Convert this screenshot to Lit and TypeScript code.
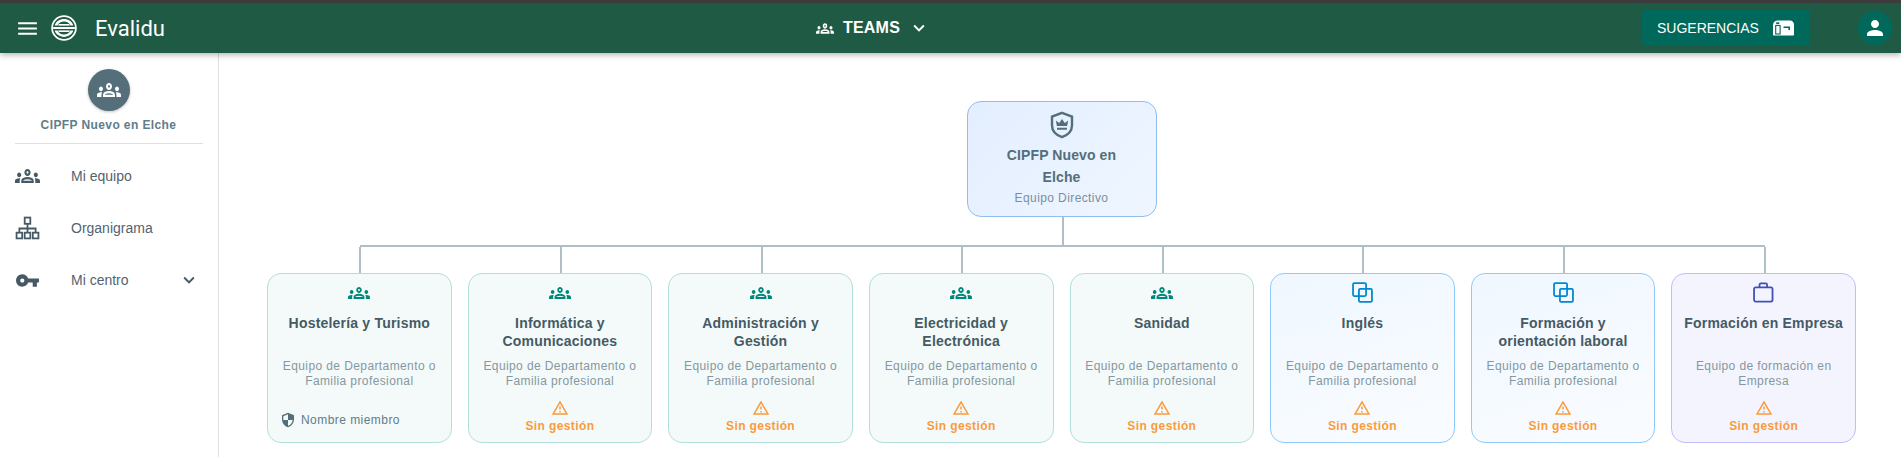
import { LitElement, html, css, svg } from 'lit'
import { customElement } from 'lit/decorators.js'

const GROUPS = 'M4 13c1.1 0 2-.9 2-2s-.9-2-2-2-2 .9-2 2 .9 2 2 2zm1.13 1.1c-.37-.06-.74-.1-1.13-.1-.99 0-1.93.21-2.78.58C.48 14.9 0 15.62 0 16.43V18h4.5v-1.61c0-.83.23-1.61.63-2.29zM20 13c1.1 0 2-.9 2-2s-.9-2-2-2-2 .9-2 2 .9 2 2 2zm4 3.43c0-.81-.48-1.53-1.22-1.85-.85-.37-1.79-.58-2.78-.58-.39 0-.76.04-1.13.1.4.68.63 1.46.63 2.29V18H24v-1.57zm-7.76-2.78c-1.17-.52-2.61-.9-4.24-.9-1.63 0-3.07.39-4.24.9C6.68 14.13 6 15.21 6 16.39V18h12v-1.61c0-1.18-.68-2.26-1.76-2.74zm-8.17 2.35c.09-.23.13-.39.91-.69.97-.38 1.99-.56 3.02-.56s2.05.18 3.02.56c.77.3.81.46.91.69H8.07zM12 8c.55 0 1 .45 1 1s-.45 1-1 1-1-.45-1-1 .45-1 1-1m0-2c-1.66 0-3 1.34-3 3s1.34 3 3 3 3-1.34 3-3-1.34-3-3-3z'
const WARN = 'M12 5.99L19.53 19H4.47L12 5.99M12 2L1 21h22L12 2zm1 14h-2v2h2v-2zm0-6h-2v4h2v-4z'
const CHEVRON = 'M7.41 8.59L12 13.17l4.59-4.58L18 10l-6 6-6-6z'
const KEY = 'M12.65 10C11.83 7.67 9.61 6 7 6c-3.31 0-6 2.69-6 6s2.69 6 6 6c2.61 0 4.83-1.67 5.65-4H17v4h4v-4h2v-4H12.65zM7 14c-1.1 0-2-.9-2-2s.9-2 2-2 2 .9 2 2-.9 2-2 2z'
const PERSON = 'M12 12c2.21 0 4-1.79 4-4s-1.79-4-4-4-4 1.79-4 4 1.79 4 4 4zm0 2c-2.67 0-8 1.34-8 4v2h16v-2c0-2.66-5.33-4-8-4z'
const MENU = 'M3 18h18v-2H3v2zm0-5h18v-2H3v2zm0-7v2h18V6H3z'
const SHIELD_HALF = 'M12 1L3 5v6c0 5.55 3.84 10.74 9 12 5.16-1.26 9-6.45 9-12V5l-9-4zm0 10.99h7c-.53 4.12-3.28 7.79-7 8.94V12H5V6.3l7-3.11v8.8z'

const icon = (d: string, cls = '') => html`<svg class=${cls} viewBox="0 0 24 24" fill="currentColor"><path d=${d}></path></svg>`

// the reference glyph is a bit taller than the stock one, so it is stretched by its box
const groupsIcon = (cls: string) => html`<svg class=${cls} viewBox="0 0 24 24" preserveAspectRatio="none" fill="currentColor"><path d=${GROUPS}></path></svg>`

const crownShield = html`<svg class="root-icon" viewBox="0 0 24 28" fill="none">
  <path d="M12 1.800l10 3.700v8.700c0 5.500-4.100 9.800-10 11.900-5.900-2.100-10-6.400-10-11.900V5.500z" stroke="currentColor" stroke-width="2.400"></path>
  <path d="M5.800 9.500l3.400 2.400L12 8l2.800 3.900 3.400-2.400-1.100 5.600H6.900zM7 16.700h10v2.100H7z" fill="currentColor"></path>
</svg>`

const orgIcon = html`<svg viewBox="0 0 24 24" fill="none" stroke="currentColor" stroke-width="1.700">
  <rect x="9.300" y="1.500" width="5.400" height="6"></rect>
  <rect x="1.500" y="16" width="5.400" height="5.500"></rect>
  <rect x="9.300" y="16" width="5.400" height="5.500"></rect>
  <rect x="17.100" y="16" width="5.400" height="5.500"></rect>
  <path d="M12 7.500V16M4.200 16v-4h15.600v4"></path>
</svg>`

const copyIcon = html`<svg class="card-icon big" viewBox="0 0 20 20" fill="none" stroke="currentColor" stroke-width="1.700">
  <rect x="1" y="1" width="12.400" height="12.400" rx="1.200"></rect>
  <rect x="6.600" y="6.600" width="12.400" height="12.400" rx="1.200"></rect>
</svg>`

const caseIcon = html`<svg class="card-icon big" viewBox="0 0 20 20" fill="none" stroke="currentColor" stroke-width="1.700">
  <rect x="1" y="5.200" width="17.600" height="13.400" rx="1.600"></rect>
  <path d="M6.200 5.200V2.600c0-.7.500-1.200 1.200-1.200h4.800c.7 0 1.200.5 1.200 1.200v2.600"></path>
</svg>`

const logo = svg`<circle cx="12" cy="12" r="11" fill="none" stroke="currentColor" stroke-width="1.600"></circle>
  <path d="M3.400 9.600C4.600 6 8 3.800 12 3.800s7.400 2.200 8.600 5.800zM3.400 14.400h17.200C19.400 18 16 20.200 12 20.200s-7.400-2.200-8.600-5.800z" fill="currentColor"></path>
  <path d="M6 9.600C7 7.200 9.300 6 12 6s5 1.200 6 3.600zM6 14.400h12C17 16.800 14.700 18 12 18s-5-1.200-6-3.600z" fill="#1f5a44"></path>
  <path d="M2 11h20v2H2zM7 8.200h10v1.400H7zM7 14.400h10v1.400H7z" fill="currentColor"></path>`

const mailbox = html`<svg class="mailbox" viewBox="0 0 21 16">
  <path d="M5 .5h12c2.200 0 4 1.800 4 4v10c0 .6-.5 1-1 1H1c-.6 0-1-.4-1-1V5C0 2.500 2 .5 5 .5z" fill="#fff"></path>
  <rect x="3.200" y="2.300" width="3" height="1.800" fill="#00695c"></rect>
  <rect x="2.700" y="5.500" width="4.400" height="8.500" fill="none" stroke="#00695c" stroke-width="1.100"></rect>
  <path d="M10.500 6.500h6.500v3.500h-1.600V8h-4.900z" fill="#00695c"></path>
</svg>`

interface Team {
  kind: 'dept' | 'area' | 'fct'
  title: string
  desc: string
  member?: string
}

const TEAMS: Team[] = [
  { kind: 'dept', title: 'Hostelería y Turismo', desc: 'Equipo de Departamento o Familia profesional', member: 'Nombre miembro' },
  { kind: 'dept', title: 'Informática y Comunicaciones', desc: 'Equipo de Departamento o Familia profesional' },
  { kind: 'dept', title: 'Administración y Gestión', desc: 'Equipo de Departamento o Familia profesional' },
  { kind: 'dept', title: 'Electricidad y Electrónica', desc: 'Equipo de Departamento o Familia profesional' },
  { kind: 'dept', title: 'Sanidad', desc: 'Equipo de Departamento o Familia profesional' },
  { kind: 'area', title: 'Inglés', desc: 'Equipo de Departamento o Familia profesional' },
  { kind: 'area', title: 'Formación y orientación laboral', desc: 'Equipo de Departamento o Familia profesional' },
  { kind: 'fct', title: 'Formación en Empresa', desc: 'Equipo de formación en Empresa' },
]

@customElement('app-root')
export class AppRoot extends LitElement {
  static styles = css`
    :host {
      display: block;
      height: 457px;
      overflow: hidden;
      background: #fff;
      font-family: 'Liberation Sans', Arial, sans-serif;
      color: #455a64;
    }

    svg {
      display: block;
      flex: none;
    }

    .topbar {
      position: relative;
      z-index: 2;
      height: 50px;
      border-top: 3px solid #3c3c3c;
      background: #1f5a44;
      color: #fff;
      display: flex;
      align-items: center;
      box-shadow: 0 2px 6px rgba(0, 0, 0, 0.3);
    }

    .brand {
      display: flex;
      align-items: center;
      width: 816px;
      box-sizing: border-box;
      padding-left: 15px;
    }

    .menu {
      width: 25px;
      height: 25px;
    }

    .logo {
      width: 26px;
      height: 26px;
      margin-left: 11px;
    }

    .name {
      font-family: Roboto, sans-serif;
      font-size: 22px;
      margin-left: 18px;
    }

    .switch {
      display: flex;
      align-items: center;
      font-size: 16px;
      font-weight: 700;
      letter-spacing: 0.2px;
    }

    .switch .groups {
      width: 18px;
      height: 21px;
      margin-right: 9px;
    }

    .switch .chev {
      width: 22px;
      height: 22px;
      margin-left: 8px;
    }

    .actions {
      display: flex;
      align-items: center;
      margin-left: auto;
      padding-right: 9px;
    }

    .suggest {
      display: flex;
      align-items: center;
      width: 168px;
      height: 36px;
      box-sizing: border-box;
      padding-left: 15px;
      background: #00695c;
      border-radius: 3px;
      font-size: 14px;
    }

    .mailbox {
      width: 21px;
      height: 16px;
      margin-left: 14px;
    }

    .avatar {
      width: 34px;
      height: 34px;
      margin-left: 48px;
      border-radius: 50%;
      background: #00695c;
      display: flex;
      align-items: center;
      justify-content: center;
    }

    .avatar svg {
      width: 24px;
      height: 24px;
    }

    .body {
      display: flex;
      height: 404px;
    }

    .side {
      width: 219px;
      box-sizing: border-box;
      flex: none;
      border-right: 1px solid #e0e0e0;
      padding: 16px 15px 0;
    }

    .team {
      display: flex;
      flex-direction: column;
      align-items: center;
      height: 74px;
      border-bottom: 1px solid #e0e0e0;
    }

    .team-avatar {
      width: 42px;
      height: 42px;
      border-radius: 50%;
      background: #546e7a;
      color: #fff;
      display: flex;
      align-items: center;
      justify-content: center;
      box-shadow: 0 1px 3px rgba(0, 0, 0, 0.25);
    }

    .team-avatar svg {
      width: 24px;
      height: 28px;
    }

    .team-name {
      margin-top: 7px;
      margin-right: 1px;
      font-size: 12px;
      font-weight: 700;
      letter-spacing: 0.4px;
      color: #607d8b;
    }

    .nav {
      display: flex;
      flex-direction: column;
      margin-top: 6px;
    }

    .nav-item {
      display: flex;
      align-items: center;
      height: 52px;
      font-size: 14px;
      color: #546370;
    }

    .nav-item svg {
      width: 25px;
      height: 25px;
      color: #455a64;
    }

    .nav-item .groups {
      height: 28px;
    }

    .nav-item span {
      margin-left: 31px;
      flex: 1;
    }

    .nav-item .chev {
      width: 22px;
      height: 22px;
      margin-right: 3px;
    }

    .main {
      flex: 1;
      min-width: 0;
      padding: 48px 45px 0 48px;
      display: flex;
      flex-direction: column;
      align-items: center;
    }

    .root {
      width: 190px;
      height: 116px;
      box-sizing: border-box;
      padding: 9px 20px 0;
      border: 1px solid #90bdf0;
      border-radius: 14px;
      background: linear-gradient(135deg, #e3eeff, #eff6ff);
      display: flex;
      flex-direction: column;
      align-items: center;
      text-align: center;
      color: #546e7a;
    }

    .root-icon {
      width: 24px;
      height: 28px;
    }

    .root-title {
      margin-top: 5px;
      font-size: 14px;
      font-weight: 700;
      letter-spacing: 0.1px;
      line-height: 22px;
    }

    .root-desc {
      font-size: 12px;
      line-height: 20px;
      letter-spacing: 0.4px;
      color: #78909c;
    }

    .stem {
      width: 2px;
      height: 28px;
      margin-left: 2px;
      background: #b0bec5;
    }

    .rail {
      align-self: stretch;
      height: 2px;
      margin: 0 91px 0 93px;
      background: #b0bec5;
    }

    .cards {
      align-self: stretch;
      display: grid;
      grid-template-columns: repeat(8, 1fr);
      gap: 16px;
    }

    .col {
      display: flex;
      flex-direction: column;
      align-items: center;
    }

    .drop {
      width: 2px;
      height: 26px;
      margin-left: 2px;
      background: #b0bec5;
    }

    .card {
      width: 100%;
      height: 170px;
      box-sizing: border-box;
      padding: 7px 12px 0;
      border: 1px solid #b2dfdb;
      border-radius: 14px;
      background: #f4fafa;
      display: flex;
      flex-direction: column;
      align-items: center;
      text-align: center;
    }

    .card.area {
      border-color: #90caf9;
      background: linear-gradient(160deg, #f0f7ff, #f9fcff);
    }

    .card.fct {
      border-color: #c0bdfb;
      background: #f4f4fe;
    }

    .card-icon {
      width: 22px;
      height: 24px;
      color: #00897b;
    }

    .card-icon.big {
      width: 21px;
      height: 21px;
      margin-top: 1px;
      margin-bottom: 2px;
    }

    .area .card-icon {
      color: #0288d1;
    }

    .fct .card-icon {
      color: #3f51b5;
    }

    .title {
      height: 36px;
      margin: 9px -2px 0;
      font-size: 14px;
      font-weight: 700;
      letter-spacing: 0.2px;
      line-height: 18px;
      color: #455a64;
    }

    .desc {
      margin-top: 9px;
      font-size: 12px;
      letter-spacing: 0.4px;
      line-height: 15px;
      color: #84989f;
    }

    .warn {
      margin-top: 10px;
      display: flex;
      flex-direction: column;
      align-items: center;
      font-size: 12px;
      font-weight: 700;
      letter-spacing: 0.4px;
      line-height: 16px;
      color: #fb9a3c;
    }

    .warn svg {
      width: 18px;
      height: 18px;
      margin-bottom: 1px;
    }

    .member {
      align-self: flex-start;
      display: flex;
      align-items: center;
      gap: 5px;
      margin-top: 23px;
      font-size: 12px;
      letter-spacing: 0.45px;
      color: #607d8b;
    }

    .member svg {
      width: 16px;
      height: 16px;
      color: #546e7a;
    }
  `

  private renderCardIcon(kind: Team['kind']) {
    if (kind === 'dept') return groupsIcon('card-icon')
    return kind === 'area' ? copyIcon : caseIcon
  }

  private renderCard(t: Team) {
    return html`
      <div class="col">
        <div class="drop"></div>
        <div class="card ${t.kind}">
          ${this.renderCardIcon(t.kind)}
          <div class="title">${t.title}</div>
          <div class="desc">${t.desc}</div>
          ${t.member
            ? html`<div class="member">${icon(SHIELD_HALF)}${t.member}</div>`
            : html`<div class="warn">${icon(WARN)}Sin gestión</div>`}
        </div>
      </div>
    `
  }

  render() {
    return html`
      <header class="topbar">
        <div class="brand">
          ${icon(MENU, 'menu')}
          <svg class="logo" viewBox="0 0 24 24">${logo}</svg>
          <span class="name">Evalidu</span>
        </div>
        <div class="switch">
          ${groupsIcon('groups')}
          TEAMS
          ${icon(CHEVRON, 'chev')}
        </div>
        <div class="actions">
          <div class="suggest">SUGERENCIAS ${mailbox}</div>
          <div class="avatar">${icon(PERSON)}</div>
        </div>
      </header>
      <div class="body">
        <aside class="side">
          <div class="team">
            <div class="team-avatar">${groupsIcon('groups')}</div>
            <div class="team-name">CIPFP Nuevo en Elche</div>
          </div>
          <nav class="nav">
            <div class="nav-item">${groupsIcon('groups')}<span>Mi equipo</span></div>
            <div class="nav-item">${orgIcon}<span>Organigrama</span></div>
            <div class="nav-item">${icon(KEY)}<span>Mi centro</span>${icon(CHEVRON, 'chev')}</div>
          </nav>
        </aside>
        <main class="main">
          <div class="root">
            ${crownShield}
            <div class="root-title">CIPFP Nuevo en Elche</div>
            <div class="root-desc">Equipo Directivo</div>
          </div>
          <div class="stem"></div>
          <div class="rail"></div>
          <div class="cards">${TEAMS.map(t => this.renderCard(t))}</div>
        </main>
      </div>
    `
  }
}
